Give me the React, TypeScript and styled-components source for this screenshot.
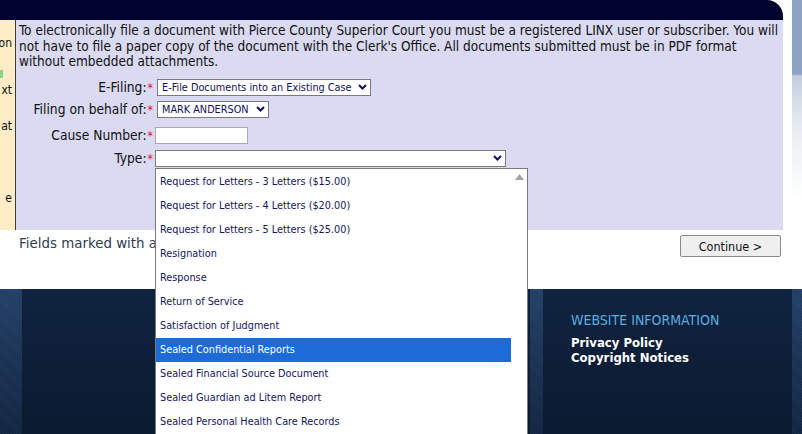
import React from 'react';
import styled, { createGlobalStyle } from 'styled-components';

const GlobalStyle = createGlobalStyle`
  html, body { margin: 0; padding: 0; overflow: hidden; background: #fff; }
  #root { width: 802px; height: 434px; overflow: hidden; }
`;

const SANS = `"DejaVu Sans Condensed", "DejaVu Sans", sans-serif`;

const Page = styled.div`
  width: 802px;
  height: 434px;
  display: flex;
  flex-direction: column;
  font-family: ${SANS};
  font-stretch: condensed;
  color: #111;
`;

const Upper = styled.div`
  display: flex;
  height: 289px;
`;

const MainColumn = styled.div`
  width: 783px;
  display: flex;
  flex-direction: column;
`;

const SideStrip = styled.div`
  width: 10px;
  margin-left: 9px;
  background: linear-gradient(
    to bottom,
    #8ca3c4 0,
    #8ca3c4 74px,
    #c3cedd 76px,
    #e9edf3 130px,
    #ffffff 200px
  );
`;

const HeaderBar = styled.div`
  height: 20px;
  background: #03032f;
  border-top-right-radius: 16px;
`;

const Body = styled.div`
  display: flex;
  height: 210px;
`;

const Sidebar = styled.div`
  width: 16px;
  background: #fdecc6;
  border-right: 1px solid #3a3a3a;
  overflow: hidden;
  display: flex;
  flex-direction: column;
  align-items: flex-end;
  padding-top: 16px;
  box-sizing: border-box;
`;

const Frag = styled.span<{ $mt: number }>`
  display: block;
  margin-top: ${(p) => p.$mt}px;
  font-size: 12px;
  line-height: 14px;
  white-space: nowrap;
  color: #111;
  padding-right: 3px;
`;

const GreenMark = styled.span`
  display: block;
  align-self: flex-start;
  width: 3px;
  height: 8px;
  margin-top: 20px;
  background: #8fd18a;
`;

const Panel = styled.div`
  flex: 1;
  background: #dadaf3;
  padding: 3px 4px 0 3px;
  box-sizing: border-box;
`;

const Intro = styled.p`
  margin: 0;
  font-size: 13.5px;
  line-height: 15.5px;
  white-space: nowrap;
  color: #111;
`;

const Form = styled.div`
  display: flex;
  flex-direction: column;
  margin-top: 9px;
`;

const FormRow = styled.div<{ $mt: number }>`
  display: flex;
  align-items: center;
  height: 17px;
  margin-top: ${(p) => p.$mt}px;
`;

const Label = styled.label`
  width: 134px;
  text-align: right;
  font-size: 13.7px;
  white-space: nowrap;
  color: #111;
`;

const Req = styled.span`
  color: #e0141e;
  font-size: 12px;
  margin-left: 1px;
`;

const SelectBox = styled.div<{ $w: number; $ml: number }>`
  position: relative;
  box-sizing: border-box;
  width: ${(p) => p.$w}px;
  height: 17px;
  margin-left: ${(p) => p.$ml}px;
  display: flex;
  align-items: center;
  justify-content: space-between;
  padding: 0 3px 0 4px;
  background: #fff;
  border: 1px solid #7a7a7a;
  font-size: 10.8px;
  color: #10105a;
  white-space: nowrap;
`;

const TextInput = styled.div`
  box-sizing: border-box;
  width: 93px;
  height: 17px;
  margin-left: 2px;
  background: #fff;
  border: 1px solid #a9a9a9;
`;

const Popup = styled.div`
  position: absolute;
  top: calc(100% + 2px);
  left: -1px;
  width: 373px;
  height: 272px;
  box-sizing: border-box;
  border: 1px solid #7a7a7a;
  background: #fff;
  display: flex;
  overflow: hidden;
  z-index: 10;
`;

const OptionList = styled.ul`
  list-style: none;
  margin: 0;
  padding: 1px 0 0 0;
  flex: 1;
`;

const Option = styled.li<{ $selected?: boolean }>`
  height: 24px;
  line-height: 24px;
  padding-left: 4px;
  font-size: 10.8px;
  white-space: nowrap;
  color: ${(p) => (p.$selected ? '#ffffff' : '#16165a')};
  background: ${(p) => (p.$selected ? '#1c6bd6' : 'transparent')};
`;

const ScrollTrack = styled.div`
  width: 16px;
  display: flex;
  justify-content: center;
  padding-top: 5px;
  box-sizing: border-box;
`;

const BottomRow = styled.div`
  height: 59px;
  display: flex;
  justify-content: space-between;
  align-items: flex-start;
  padding: 5px 2px 0 19px;
  box-sizing: border-box;
`;

const Note = styled.span`
  font-family: "DejaVu Sans", sans-serif;
  font-stretch: normal;
  font-size: 13.4px;
  line-height: 15px;
  margin-top: 1px;
  color: #2e3d4e;
  white-space: nowrap;
`;

const ContinueButton = styled.button`
  width: 101px;
  height: 22px;
  box-sizing: border-box;
  border: 1px solid #8a8a8a;
  border-radius: 2px;
  background: #efefef;
  font-family: ${SANS};
  font-stretch: condensed;
  font-size: 12.5px;
  color: #111;
  padding: 0;
`;

const Footer = styled.footer`
  flex: 1;
  display: flex;
`;

const EdgeStrip = styled.div<{ $w: number }>`
  width: ${(p) => p.$w}px;
  background:
    repeating-linear-gradient(45deg, rgba(255,255,255,0.03) 0 1px, transparent 1px 2px),
    linear-gradient(to bottom, #213f66, #112440);
`;

const FooterMain = styled.div`
  flex: 1;
  background: linear-gradient(to bottom, #10233f, #0a1a30);
`;

const InfoCol = styled.div`
  width: 249px;
  background: linear-gradient(to bottom, #10233f, #0a1a30);
  padding: 24px 0 0 28px;
  box-sizing: border-box;
  display: flex;
  flex-direction: column;
`;

const InfoHeading = styled.div`
  font-size: 14px;
  line-height: 15px;
  color: #5aaee2;
  margin-bottom: 7px;
  white-space: nowrap;
`;

const InfoLink = styled.a`
  font-size: 13px;
  line-height: 15px;
  font-weight: bold;
  color: #fff;
  text-decoration: none;
  white-space: nowrap;
`;

const Chevron = () => (
  <svg width="9" height="6" viewBox="0 0 9 6">
    <path d="M1 1 L4.5 4.5 L8 1" fill="none" stroke="#10105a" strokeWidth="2" />
  </svg>
);

const UpArrow = () => (
  <svg width="9" height="6" viewBox="0 0 9 6">
    <polygon points="0,6 4.5,0 9,6" fill="#a3a3a3" />
  </svg>
);

const options = [
  'Request for Letters - 3 Letters ($15.00)',
  'Request for Letters - 4 Letters ($20.00)',
  'Request for Letters - 5 Letters ($25.00)',
  'Resignation',
  'Response',
  'Return of Service',
  'Satisfaction of Judgment',
  'Sealed Confidential Reports',
  'Sealed Financial Source Document',
  'Sealed Guardian ad Litem Report',
  'Sealed Personal Health Care Records',
  'Sealed Personal Information',
];

export default function App() {
  return (
    <>
      <GlobalStyle />
      <Page>
        <Upper>
          <MainColumn>
            <HeaderBar />
            <Body>
              <Sidebar>
                <Frag $mt={0}>on</Frag>
                <GreenMark />
                <Frag $mt={5}>xt</Frag>
                <Frag $mt={22}>at</Frag>
                <Frag $mt={58}>e</Frag>
              </Sidebar>
              <Panel>
                <Intro>
                  To electronically file a document with Pierce County Superior Court you must be a registered LINX user or subscriber. You will
                  <br />
                  not have to file a paper copy of the document with the Clerk's Office. All documents submitted must be in PDF format
                  <br />
                  without embedded attachments.
                </Intro>
                <Form>
                  <FormRow $mt={0}>
                    <Label>
                      E-Filing:<Req>*</Req>
                    </Label>
                    <SelectBox $w={214} $ml={4}>
                      <span>E-File Documents into an Existing Case</span>
                      <Chevron />
                    </SelectBox>
                  </FormRow>
                  <FormRow $mt={5}>
                    <Label>
                      Filing on behalf of:<Req>*</Req>
                    </Label>
                    <SelectBox $w={112} $ml={4}>
                      <span>MARK ANDERSON</span>
                      <Chevron />
                    </SelectBox>
                  </FormRow>
                  <FormRow $mt={9}>
                    <Label>
                      Cause Number:<Req>*</Req>
                    </Label>
                    <TextInput />
                  </FormRow>
                  <FormRow $mt={6}>
                    <Label>
                      Type:<Req>*</Req>
                    </Label>
                    <SelectBox $w={351} $ml={2}>
                      <span />
                      <Chevron />
                      <Popup>
                        <OptionList>
                          {options.map((o) => (
                            <Option key={o} $selected={o === 'Sealed Confidential Reports'}>
                              {o}
                            </Option>
                          ))}
                        </OptionList>
                        <ScrollTrack>
                          <UpArrow />
                        </ScrollTrack>
                      </Popup>
                    </SelectBox>
                  </FormRow>
                </Form>
              </Panel>
            </Body>
            <BottomRow>
              <Note>Fields marked with an asterisk (*) are required.</Note>
              <ContinueButton>Continue &gt;</ContinueButton>
            </BottomRow>
          </MainColumn>
          <SideStrip />
        </Upper>
        <Footer>
          <EdgeStrip $w={22} />
          <FooterMain />
          <EdgeStrip $w={13} />
          <InfoCol>
            <InfoHeading>WEBSITE INFORMATION</InfoHeading>
            <InfoLink href="#">Privacy Policy</InfoLink>
            <InfoLink href="#">Copyright Notices</InfoLink>
          </InfoCol>
          <EdgeStrip $w={10} />
        </Footer>
      </Page>
    </>
  );
}
